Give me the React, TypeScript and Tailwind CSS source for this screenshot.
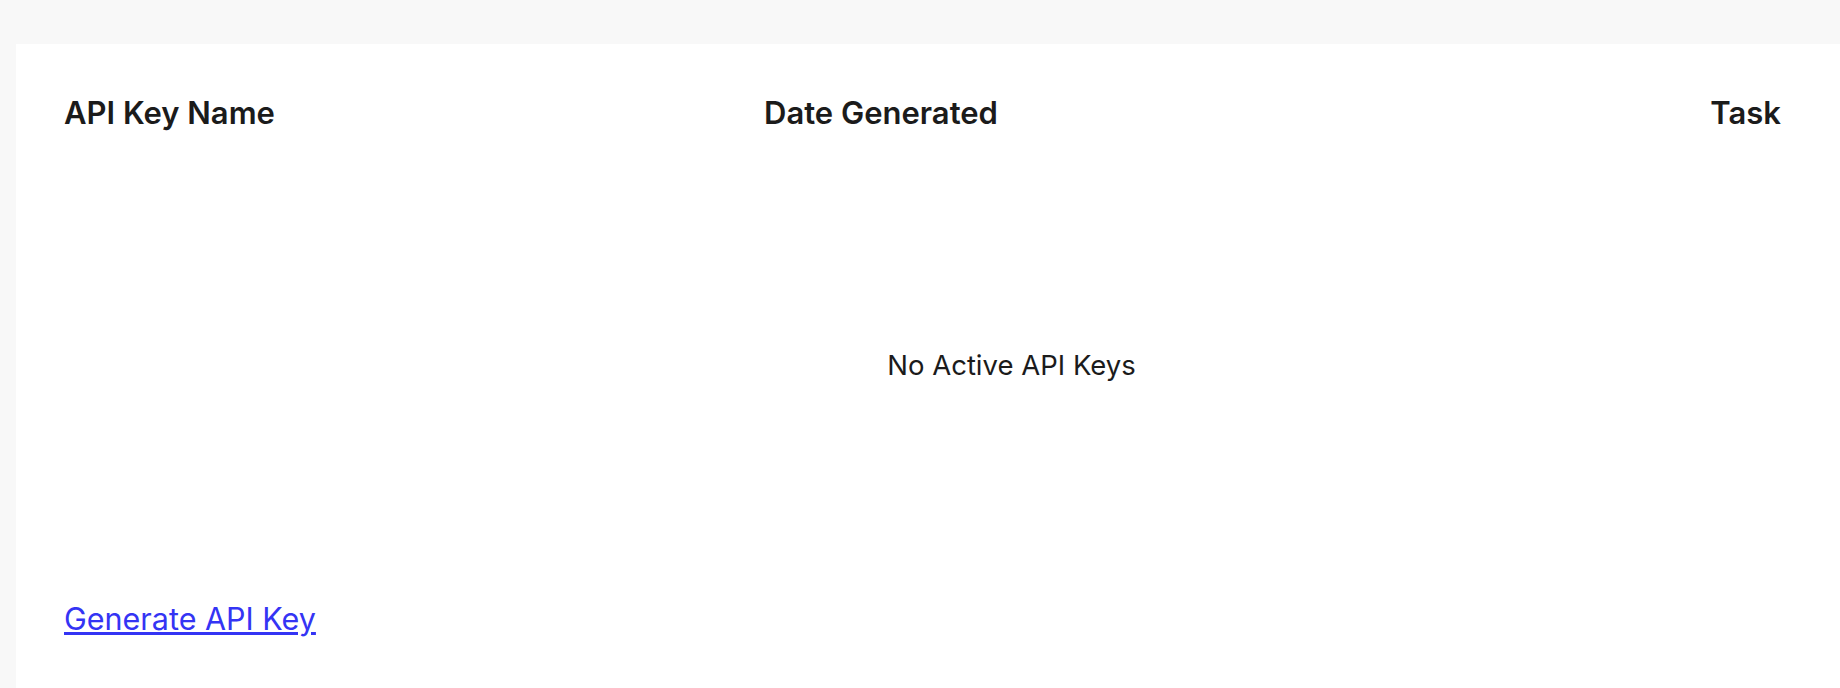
import * as React from "react";

type ApiKey = {
    id: string;
    name: string;
    createdAt: string;
};

const keys: ApiKey[] = [];

export default function App() {
    return (
        <div
            className="min-h-[688px] bg-[#f8f8f8] pt-[44px] pl-4 text-[#1b1b1b]"
            style={{ fontFamily: "Inter, 'Noto Sans', sans-serif" }}
        >
            <div className="min-h-[644px] bg-white pl-[48px] pr-[59px] pt-[47px]">
                <div className="grid grid-cols-[700px_1fr_auto] items-center">
                    <div className="text-[31px] font-semibold leading-[44px]">API Key Name</div>
                    <div className="text-[31px] font-semibold leading-[44px]">Date Generated</div>
                    <div className="text-[31px] font-semibold leading-[44px]">Task</div>
                </div>

                {keys.length === 0 ? (
                    <div className="h-[466px] pl-[178px] pt-[212px] text-center text-[27.5px] leading-[36px]">
                        No Active API Keys
                    </div>
                ) : null}

                <a href="#" className="text-[30.5px] leading-[36px] text-[#3434f4] underline">
                    Generate API Key
                </a>
            </div>
        </div>
    );
}
